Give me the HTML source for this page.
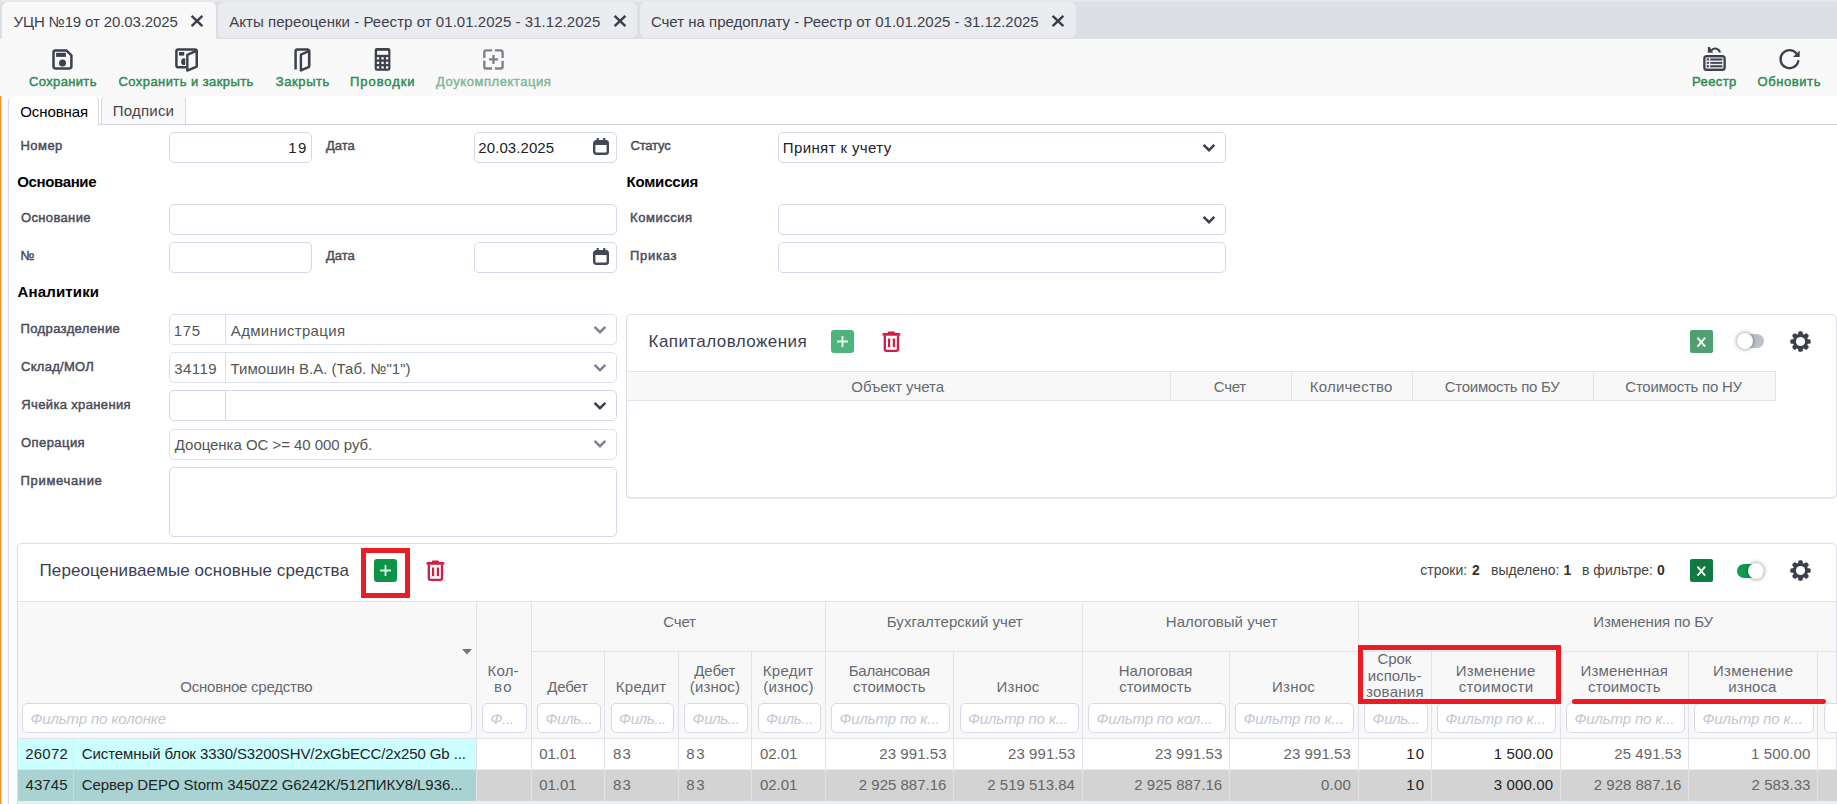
<!DOCTYPE html>
<html lang="ru"><head><meta charset="utf-8"><title>УЦН №19</title>
<style>
html,body{margin:0;padding:0;}
body{width:1837px;height:804px;overflow:hidden;background:#fff;font-family:"Liberation Sans",sans-serif;}
#root{position:relative;width:1837px;height:804px;overflow:hidden;background:#fff;}
#root div,#root span.t,#root svg{position:absolute;box-sizing:border-box;}
span.t{white-space:pre;line-height:20px;height:20px;}
.inp{border:1px solid #d5d8e6;border-radius:5px;background:#fff;}
.flt{border:1px solid #d6d9e6;border-radius:5px;background:#fff;}
.panel{border:1px solid #dcdde6;border-radius:5px;background:#fff;box-shadow:0 1px 1px rgba(40,40,90,.10);}
.vl{background:#e4e4ea;width:1px;}
.hl{background:#e4e4ea;height:1px;}

</style></head><body>
<div id="root">
<div class="" style="left:0px;top:0px;width:1837px;height:39px;background:#dcdfe4;"></div>
<div class="" style="left:0px;top:0px;width:1837px;height:2px;background:#e6e8ec;"></div>
<div class="" style="left:2px;top:2px;width:214px;height:38px;background:#f9f9f9;border-radius:6px 6px 0 0;"></div>
<div class="" style="left:218px;top:2px;width:419px;height:36px;background:#ebecf0;border-radius:6px;"></div>
<div class="" style="left:640px;top:2px;width:436px;height:36px;background:#ebecf0;border-radius:6px;"></div>
<span class="t" id="t1" style="left:13.55px;top:11.70px;font-size:15px;font-weight:400;color:#3b3f4c;letter-spacing:-0.125px;">УЦН №19 от 20.03.2025</span>
<span class="t" id="t2" style="left:229.30px;top:11.70px;font-size:15px;font-weight:400;color:#3b3f4c;letter-spacing:0.044px;">Акты переоценки - Реестр от 01.01.2025 - 31.12.2025</span>
<span class="t" id="t3" style="left:650.90px;top:11.70px;font-size:15px;font-weight:400;color:#3b3f4c;letter-spacing:-0.002px;">Счет на предоплату - Реестр от 01.01.2025 - 31.12.2025</span>
<svg style="left:189.5px;top:14.3px" width="14" height="14" viewBox="0 0 14 14"><path d="M1.6 1.9 L12.4 12.1 M12.4 1.9 L1.6 12.1" stroke="#3b3f4c" stroke-width="2.5" fill="none"/></svg>
<svg style="left:612.5px;top:14.3px" width="14" height="14" viewBox="0 0 14 14"><path d="M1.6 1.9 L12.4 12.1 M12.4 1.9 L1.6 12.1" stroke="#3b3f4c" stroke-width="2.5" fill="none"/></svg>
<svg style="left:1050.5px;top:14.3px" width="14" height="14" viewBox="0 0 14 14"><path d="M1.6 1.9 L12.4 12.1 M12.4 1.9 L1.6 12.1" stroke="#3b3f4c" stroke-width="2.5" fill="none"/></svg>
<div class="" style="left:0px;top:39px;width:1837px;height:57px;background:#f9f9f9;"></div>
<span class="t" id="t4" style="left:29.05px;top:71.70px;font-size:13px;font-weight:400;color:#2e8b57;letter-spacing:0.344px;-webkit-text-stroke:0.45px #2e8b57;">Сохранить</span>
<span class="t" id="t5" style="left:118.55px;top:71.70px;font-size:13px;font-weight:400;color:#2e8b57;letter-spacing:0.417px;-webkit-text-stroke:0.45px #2e8b57;">Сохранить и закрыть</span>
<span class="t" id="t6" style="left:275.80px;top:71.70px;font-size:13px;font-weight:400;color:#2e8b57;letter-spacing:0.583px;-webkit-text-stroke:0.45px #2e8b57;">Закрыть</span>
<span class="t" id="t7" style="left:350.05px;top:71.70px;font-size:13px;font-weight:400;color:#2e8b57;letter-spacing:0.929px;-webkit-text-stroke:0.45px #2e8b57;">Проводки</span>
<span class="t" id="t8" style="left:436.05px;top:71.70px;font-size:13px;font-weight:400;color:#7fb896;letter-spacing:0.554px;-webkit-text-stroke:0.45px #7fb896;">Доукомплектация</span>
<span class="t" id="t9" style="left:1692.05px;top:71.70px;font-size:13px;font-weight:400;color:#2e8b57;letter-spacing:0.400px;-webkit-text-stroke:0.45px #2e8b57;">Реестр</span>
<span class="t" id="t10" style="left:1757.55px;top:71.70px;font-size:13px;font-weight:400;color:#2e8b57;letter-spacing:0.571px;-webkit-text-stroke:0.45px #2e8b57;">Обновить</span>
<svg style="left:48px;top:45px" width="30" height="30" viewBox="48 45 30 30"><path d="M55.3 50.6 H66.6 L71.4 55.3 V66.6 a1.8 1.8 0 0 1 -1.8 1.8 H55.3 a1.8 1.8 0 0 1 -1.8 -1.8 V52.4 a1.8 1.8 0 0 1 1.8 -1.8 Z" fill="none" stroke="#3d404d" stroke-width="2.5" stroke-linejoin="round"/><rect x="56.1" y="52.8" width="9.8" height="4.1" fill="#3d404d"/><circle cx="62.5" cy="62.9" r="3.5" fill="#3d404d"/></svg>
<svg style="left:170px;top:44px" width="34" height="32" viewBox="170 44 34 32"><path d="M186.4 67.3 H178.2 a1.8 1.8 0 0 1 -1.8 -1.8 V51.2 a1.8 1.8 0 0 1 1.8 -1.8 H194.9 a1.8 1.8 0 0 1 1.8 1.8 V66" fill="none" stroke="#3d404d" stroke-width="2.5"/><path d="M187.3 54.9 L196.7 50.6 V66.6 L187.3 70.6 Z" fill="#f9f9f9" stroke="#3d404d" stroke-width="2.4" stroke-linejoin="round"/><rect x="179" y="52" width="5.2" height="3.6" fill="#3d404d"/><path d="M185 58.4 a3.3 3.3 0 0 0 0 6.6 Z" fill="#3d404d" transform="translate(-0.6 0)"/><rect x="182.6" y="58.4" width="2.6" height="6.6" fill="#3d404d"/></svg>
<svg style="left:288px;top:44px" width="30" height="32" viewBox="288 44 30 32"><path d="M295.6 69.6 V51.2 a1.8 1.8 0 0 1 1.8 -1.8 H307.3 a1.8 1.8 0 0 1 1.8 1.8 V66" fill="none" stroke="#3d404d" stroke-width="2.5"/><path d="M300.9 54.6 L309.1 51 V66.8 L300.9 70.4 Z" fill="#f9f9f9" stroke="#3d404d" stroke-width="2.4" stroke-linejoin="round"/></svg>
<svg style="left:370px;top:44px" width="26" height="32" viewBox="370 44 26 32"><rect x="374.7" y="48.1" width="15.7" height="22.6" rx="2.2" fill="#3d404d"/><rect x="377.1" y="50.8" width="11.1" height="4" fill="#f9f9f9"/><rect x="376.85" y="57.15" width="2.3" height="2.3" fill="#f9f9f9"/><rect x="376.85" y="61.75" width="2.3" height="2.3" fill="#f9f9f9"/><rect x="376.85" y="66.25" width="2.3" height="2.3" fill="#f9f9f9"/><rect x="381.40" y="57.15" width="2.3" height="2.3" fill="#f9f9f9"/><rect x="381.40" y="61.75" width="2.3" height="2.3" fill="#f9f9f9"/><rect x="381.40" y="66.25" width="2.3" height="2.3" fill="#f9f9f9"/><rect x="385.95" y="57.15" width="2.3" height="2.3" fill="#f9f9f9"/><rect x="385.95" y="61.75" width="2.3" height="2.3" fill="#f9f9f9"/><rect x="385.95" y="66.25" width="2.3" height="2.3" fill="#f9f9f9"/></svg>
<svg style="left:478px;top:44px" width="32" height="32" viewBox="478 44 32 32"><g fill="none" stroke="#7e828e" stroke-width="2.4"><path d="M484.3 58.1 V52.4 a2 2 0 0 1 2 -2 H492.1"/><path d="M494.9 50.4 H500.6 a2 2 0 0 1 2 2 V58.1"/><path d="M502.6 60.7 V66.5 a2 2 0 0 1 -2 2 H494.9"/><path d="M492.1 68.5 H486.3 a2 2 0 0 1 -2 -2 V60.7"/><path d="M493.45 54.9 V63.9 M489 59.4 H498"/></g></svg>
<svg style="left:1698px;top:42px" width="34" height="34" viewBox="1698 42 34 34"><rect x="1705.2" y="57" width="18.6" height="11.9" fill="#c6c7cc"/><rect x="1705.2" y="60.9" width="18.6" height="0.7" fill="#fff"/><rect x="1705.2" y="64.3" width="18.6" height="0.7" fill="#fff"/><rect x="1709.3" y="57" width="0.7" height="11.9" fill="#fff"/><rect x="1707" y="58.65" width="1.9" height="1.7" fill="#3d404d"/><rect x="1710.4" y="58.65" width="11.7" height="1.7" fill="#3d404d"/><rect x="1707" y="62.05" width="1.9" height="1.7" fill="#3d404d"/><rect x="1710.4" y="62.05" width="11.7" height="1.7" fill="#3d404d"/><rect x="1707" y="65.35" width="1.9" height="1.7" fill="#3d404d"/><rect x="1710.4" y="65.35" width="11.7" height="1.7" fill="#3d404d"/><rect x="1704.3" y="56.1" width="20.4" height="13.7" rx="2.4" fill="none" stroke="#3d404d" stroke-width="2.2"/><path d="M1711.5 50.3 C1714.5 47.2 1719 48.3 1720 52.6" fill="none" stroke="#3d404d" stroke-width="2.1"/><path d="M1707.9 46.9 H1709.8 L1713.1 52.8 H1707.9 Z" fill="#3d404d"/></svg>
<svg style="left:1774px;top:44px" width="32" height="32" viewBox="1774 44 32 32"><path d="M1796.6 53.6 A9 9 0 1 0 1798.3 61.2" fill="none" stroke="#3d404d" stroke-width="2.3" stroke-linecap="round"/><path d="M1799.7 50.4 V56.9 H1793 Z" fill="#3d404d"/></svg>
<div class="" style="left:0px;top:96px;width:1px;height:708px;background:#f7941d;"></div>
<div class="" style="left:1px;top:96px;width:1px;height:708px;background:#fdeacb;"></div>
<div class="" style="left:8px;top:100px;width:1px;height:704px;background:#d5d9e6;"></div>
<div class="" style="left:9px;top:124px;width:1828px;height:1px;background:#cfd4e0;"></div>
<div class="" style="left:101px;top:96px;width:85px;height:29px;background:#f8f8f8;border:1px solid #d5d9e6;border-top:none;border-bottom:1px solid #cfd4e0;border-radius:5px 5px 0 0;"></div>
<div class="" style="left:8px;top:96px;width:91px;height:30px;background:#fff;border:1px solid #d5d9e6;border-top:none;border-bottom:none;border-radius:5px 5px 0 0;"></div>
<span class="t" id="t11" style="left:20.30px;top:102.20px;font-size:15px;font-weight:400;color:#000;letter-spacing:-0.107px;">Основная</span>
<span class="t" id="t12" style="left:112.80px;top:101.20px;font-size:15px;font-weight:400;color:#444;letter-spacing:0.208px;">Подписи</span>
<span class="t" id="t13" style="left:20.55px;top:136.20px;font-size:13px;font-weight:400;color:#4a4a58;letter-spacing:0.438px;-webkit-text-stroke:0.45px #4a4a58;">Номер</span>
<div class="inp" style="left:169px;top:132px;width:143px;height:31px;"></div>
<span class="t" id="t14" style="left:288.30px;top:138.20px;font-size:15px;font-weight:400;color:#222;letter-spacing:1.250px;">19</span>
<span class="t" id="t15" style="left:326.05px;top:136.20px;font-size:13px;font-weight:400;color:#4a4a58;letter-spacing:0.000px;-webkit-text-stroke:0.45px #4a4a58;">Дата</span>
<div class="inp" style="left:474px;top:132px;width:143px;height:31px;"></div>
<span class="t" id="t16" style="left:478.30px;top:138.20px;font-size:15px;font-weight:400;color:#222;letter-spacing:0.083px;">20.03.2025</span>
<span class="t" id="t17" style="left:630.55px;top:136.20px;font-size:13px;font-weight:400;color:#4a4a58;letter-spacing:-0.200px;-webkit-text-stroke:0.45px #4a4a58;">Статус</span>
<div class="inp" style="left:778px;top:132px;width:448px;height:31px;"></div>
<span class="t" id="t18" style="left:782.80px;top:138.20px;font-size:15px;font-weight:400;color:#222;letter-spacing:0.385px;">Принят к учету</span>
<span class="t" id="t19" style="left:17.30px;top:172.20px;font-size:15px;font-weight:700;color:#000;letter-spacing:-0.375px;">Основание</span>
<span class="t" id="t20" style="left:626.55px;top:172.20px;font-size:15px;font-weight:700;color:#000;letter-spacing:-0.214px;">Комиссия</span>
<span class="t" id="t21" style="left:21.05px;top:208.20px;font-size:13px;font-weight:400;color:#4a4a58;letter-spacing:0.344px;-webkit-text-stroke:0.45px #4a4a58;">Основание</span>
<div class="inp" style="left:169px;top:204px;width:448px;height:31px;"></div>
<span class="t" id="t22" style="left:630.05px;top:208.20px;font-size:13px;font-weight:400;color:#4a4a58;letter-spacing:0.536px;-webkit-text-stroke:0.45px #4a4a58;">Комиссия</span>
<div class="inp" style="left:778px;top:204px;width:448px;height:31px;"></div>
<span class="t" id="t23" style="left:20.55px;top:246.20px;font-size:13px;font-weight:400;color:#4a4a58;letter-spacing:0.000px;-webkit-text-stroke:0.45px #4a4a58;">№</span>
<div class="inp" style="left:169px;top:242px;width:143px;height:31px;"></div>
<span class="t" id="t24" style="left:326.05px;top:246.20px;font-size:13px;font-weight:400;color:#4a4a58;letter-spacing:0.000px;-webkit-text-stroke:0.45px #4a4a58;">Дата</span>
<div class="inp" style="left:474px;top:242px;width:143px;height:31px;"></div>
<span class="t" id="t25" style="left:630.05px;top:246.20px;font-size:13px;font-weight:400;color:#4a4a58;letter-spacing:0.700px;-webkit-text-stroke:0.45px #4a4a58;">Приказ</span>
<div class="inp" style="left:778px;top:242px;width:448px;height:31px;"></div>
<span class="t" id="t26" style="left:17.55px;top:282.20px;font-size:15px;font-weight:700;color:#000;letter-spacing:0.156px;">Аналитики</span>
<span class="t" id="t27" style="left:20.55px;top:318.70px;font-size:13px;font-weight:400;color:#4a4a58;letter-spacing:0.375px;-webkit-text-stroke:0.45px #4a4a58;">Подразделение</span>
<div class="inp" style="left:169px;top:314px;width:448px;height:31px;border-color:#dcdfec;"></div>
<div class="" style="left:225px;top:315px;width:1px;height:29px;background:#dcdfec;"></div>
<span class="t" id="t28" style="left:173.80px;top:320.70px;font-size:15px;font-weight:400;color:#555;letter-spacing:0.625px;">175</span>
<span class="t" id="t29" style="left:230.80px;top:320.70px;font-size:15px;font-weight:400;color:#555;letter-spacing:0.333px;">Администрация</span>
<span class="t" id="t30" style="left:21.05px;top:357.20px;font-size:13px;font-weight:400;color:#4a4a58;letter-spacing:0.281px;-webkit-text-stroke:0.45px #4a4a58;">Склад/МОЛ</span>
<div class="inp" style="left:169px;top:352px;width:448px;height:31px;border-color:#dcdfec;"></div>
<div class="" style="left:225px;top:353px;width:1px;height:29px;background:#dcdfec;"></div>
<span class="t" id="t31" style="left:174.30px;top:358.70px;font-size:15px;font-weight:400;color:#555;letter-spacing:0.438px;">34119</span>
<span class="t" id="t32" style="left:230.55px;top:358.70px;font-size:15px;font-weight:400;color:#555;letter-spacing:0.011px;">Тимошин В.А. (Таб. №&quot;1&quot;)</span>
<span class="t" id="t33" style="left:21.30px;top:394.70px;font-size:13px;font-weight:400;color:#4a4a58;letter-spacing:0.357px;-webkit-text-stroke:0.45px #4a4a58;">Ячейка хранения</span>
<div class="inp" style="left:169px;top:390px;width:448px;height:31px;border-color:#d3d6e6;"></div>
<div class="" style="left:225px;top:391px;width:1px;height:29px;background:#d3d6e6;"></div>
<span class="t" id="t34" style="left:21.05px;top:432.70px;font-size:13px;font-weight:400;color:#4a4a58;letter-spacing:0.429px;-webkit-text-stroke:0.45px #4a4a58;">Операция</span>
<div class="inp" style="left:169px;top:429px;width:448px;height:31px;border-color:#dcdfec;"></div>
<span class="t" id="t35" style="left:174.80px;top:434.70px;font-size:15px;font-weight:400;color:#555;letter-spacing:-0.040px;">Дооценка ОС &gt;= 40 000 руб.</span>
<span class="t" id="t36" style="left:20.55px;top:471.20px;font-size:13px;font-weight:400;color:#4a4a58;letter-spacing:0.667px;-webkit-text-stroke:0.45px #4a4a58;">Примечание</span>
<div class="inp" style="left:169px;top:467px;width:448px;height:70px;"></div>
<svg style="left:1202px;top:142.5px" width="14" height="10" viewBox="0 0 14 10"><path d="M1.6 1.8 L7 7.2 L12.4 1.8" stroke="#3b3f4c" stroke-width="2.4" fill="none"/></svg>
<svg style="left:1202px;top:214.5px" width="14" height="10" viewBox="0 0 14 10"><path d="M1.6 1.8 L7 7.2 L12.4 1.8" stroke="#3b3f4c" stroke-width="2.4" fill="none"/></svg>
<svg style="left:593px;top:325px" width="14" height="10" viewBox="0 0 14 10"><path d="M1.6 1.8 L7 7.2 L12.4 1.8" stroke="#7f828e" stroke-width="2.4" fill="none"/></svg>
<svg style="left:593px;top:363px" width="14" height="10" viewBox="0 0 14 10"><path d="M1.6 1.8 L7 7.2 L12.4 1.8" stroke="#7f828e" stroke-width="2.4" fill="none"/></svg>
<svg style="left:593px;top:401px" width="14" height="10" viewBox="0 0 14 10"><path d="M1.6 1.8 L7 7.2 L12.4 1.8" stroke="#3b3f4c" stroke-width="2.4" fill="none"/></svg>
<svg style="left:593px;top:439px" width="14" height="10" viewBox="0 0 14 10"><path d="M1.6 1.8 L7 7.2 L12.4 1.8" stroke="#7f828e" stroke-width="2.4" fill="none"/></svg>
<svg style="left:593px;top:138px" width="16" height="17" viewBox="0 0 16 17"><rect x="1.2" y="3.2" width="13.6" height="12.6" rx="2" fill="none" stroke="#444854" stroke-width="2.4"/><rect x="1" y="3" width="14" height="4" fill="#444854"/><rect x="3.6" y="0" width="2.2" height="4" fill="#444854"/><rect x="10.2" y="0" width="2.2" height="4" fill="#444854"/></svg>
<svg style="left:593px;top:248px" width="16" height="17" viewBox="0 0 16 17"><rect x="1.2" y="3.2" width="13.6" height="12.6" rx="2" fill="none" stroke="#444854" stroke-width="2.4"/><rect x="1" y="3" width="14" height="4" fill="#444854"/><rect x="3.6" y="0" width="2.2" height="4" fill="#444854"/><rect x="10.2" y="0" width="2.2" height="4" fill="#444854"/></svg>
<div class="panel" style="left:626px;top:314px;width:1211px;height:184px;"></div>
<span class="t" id="t37" style="left:648.55px;top:331.50px;font-size:17px;font-weight:400;color:#3a3f51;letter-spacing:0.433px;">Капиталовложения</span>
<div class="" style="left:831px;top:330px;width:23px;height:23px;background:#4db47c;border-radius:3px;"></div>
<svg style="left:831px;top:330px" width="23" height="23" viewBox="0 0 23 23"><path d="M11.5 6 V17 M6 11.5 H17" stroke="#fff" stroke-opacity=".88" stroke-width="1.8"/></svg>
<svg style="left:882px;top:330.5px" width="19" height="22" viewBox="0 0 19 22"><path d="M2.8 4.6 V18.1 a1.7 1.7 0 0 0 1.7 1.7 H14.3 a1.7 1.7 0 0 0 1.7 -1.7 V4.6" fill="none" stroke="#d41d46" stroke-width="2.3"/><rect x="0.4" y="1.9" width="18" height="2.9" rx="1.2" fill="#d41d46"/><rect x="5.8" y="0.4" width="7.2" height="2.4" rx="1" fill="#d41d46"/><rect x="6" y="7.5" width="2.2" height="8.6" fill="#d41d46"/><rect x="10.8" y="7.5" width="2.2" height="8.6" fill="#d41d46"/></svg>
<div class="" style="left:1690px;top:330px;width:23px;height:23px;background:#4f9f73;border-radius:2px;"></div>
<svg style="left:1690px;top:330px" width="23" height="23" viewBox="0 0 23 23"><path d="M7.5 7.6 L15.1 16.6 M15.1 7.6 L7.5 16.6" stroke="#fff" stroke-opacity=".92" stroke-width="2.1"/></svg>
<div class="" style="left:1739px;top:334.1px;width:25px;height:14px;background:#bcc0cb;border-radius:7px;"></div>
<div class="" style="left:1736.6px;top:332.8px;width:16.5px;height:16.5px;background:#fff;border-radius:9px;box-shadow:0 0 4px rgba(0,0,0,.5);"></div>
<svg style="left:1789px;top:330px" width="23" height="23" viewBox="-11.5 -11.5 23 23"><circle r="7.7" fill="#3b3f4c"/><rect x="-2.3" y="-10.2" width="4.6" height="6" rx="1.5" fill="#3b3f4c" transform="rotate(0)"/><rect x="-2.3" y="-10.2" width="4.6" height="6" rx="1.5" fill="#3b3f4c" transform="rotate(45)"/><rect x="-2.3" y="-10.2" width="4.6" height="6" rx="1.5" fill="#3b3f4c" transform="rotate(90)"/><rect x="-2.3" y="-10.2" width="4.6" height="6" rx="1.5" fill="#3b3f4c" transform="rotate(135)"/><rect x="-2.3" y="-10.2" width="4.6" height="6" rx="1.5" fill="#3b3f4c" transform="rotate(180)"/><rect x="-2.3" y="-10.2" width="4.6" height="6" rx="1.5" fill="#3b3f4c" transform="rotate(225)"/><rect x="-2.3" y="-10.2" width="4.6" height="6" rx="1.5" fill="#3b3f4c" transform="rotate(270)"/><rect x="-2.3" y="-10.2" width="4.6" height="6" rx="1.5" fill="#3b3f4c" transform="rotate(315)"/><circle r="4.6" fill="#fff"/></svg>
<div class="" style="left:627px;top:371px;width:1149px;height:30px;background:#f8f8f8;border-top:1px solid #e1e2ea;border-bottom:1px solid #e1e2ea;"></div>
<div class="" style="left:1170px;top:371px;width:1px;height:30px;background:#e1e2ea;"></div>
<div class="" style="left:1291px;top:371px;width:1px;height:30px;background:#e1e2ea;"></div>
<div class="" style="left:1412px;top:371px;width:1px;height:30px;background:#e1e2ea;"></div>
<div class="" style="left:1593px;top:371px;width:1px;height:30px;background:#e1e2ea;"></div>
<div class="" style="left:1775px;top:371px;width:1px;height:30px;background:#e1e2ea;"></div>
<span class="t" id="t38" style="left:851.30px;top:377.00px;font-size:15px;font-weight:400;color:#666a70;letter-spacing:-0.068px;">Объект учета</span>
<span class="t" id="t39" style="left:1213.80px;top:377.00px;font-size:15px;font-weight:400;color:#666a70;letter-spacing:-0.250px;">Счет</span>
<span class="t" id="t40" style="left:1309.80px;top:377.00px;font-size:15px;font-weight:400;color:#666a70;letter-spacing:0.222px;">Количество</span>
<span class="t" id="t41" style="left:1444.80px;top:377.00px;font-size:15px;font-weight:400;color:#666a70;letter-spacing:-0.286px;">Стоимость по БУ</span>
<span class="t" id="t42" style="left:1625.30px;top:377.00px;font-size:15px;font-weight:400;color:#666a70;letter-spacing:-0.250px;">Стоимость по НУ</span>
<div class="panel" style="left:17px;top:543px;width:1820px;height:270px;"></div>
<span class="t" id="t43" style="left:39.55px;top:560.50px;font-size:17px;font-weight:400;color:#3a3f51;letter-spacing:0.078px;">Переоцениваемые основные средства</span>
<div class="" style="left:361px;top:548px;width:49px;height:50px;border:5px solid #ec1c24;"></div>
<div class="" style="left:374px;top:559px;width:23px;height:23px;background:#0d9344;border-radius:3px;"></div>
<svg style="left:374px;top:559px" width="23" height="23" viewBox="0 0 23 23"><path d="M11.5 6 V17 M6 11.5 H17" stroke="#fff" stroke-opacity=".88" stroke-width="1.8"/></svg>
<svg style="left:426px;top:559.5px" width="19" height="22" viewBox="0 0 19 22"><path d="M2.8 4.6 V18.1 a1.7 1.7 0 0 0 1.7 1.7 H14.3 a1.7 1.7 0 0 0 1.7 -1.7 V4.6" fill="none" stroke="#d11c45" stroke-width="2.3"/><rect x="0.4" y="1.9" width="18" height="2.9" rx="1.2" fill="#d11c45"/><rect x="5.8" y="0.4" width="7.2" height="2.4" rx="1" fill="#d11c45"/><rect x="6" y="7.5" width="2.2" height="8.6" fill="#d11c45"/><rect x="10.8" y="7.5" width="2.2" height="8.6" fill="#d11c45"/></svg>
<span class="t" id="t44" style="left:1420.30px;top:560.10px;font-size:14px;font-weight:400;color:#444;letter-spacing:0.000px;">строки: </span>
<span class="t" id="t45" style="left:1472.05px;top:560.10px;font-size:14px;font-weight:700;color:#333;letter-spacing:0.000px;">2</span>
<span class="t" id="t46" style="left:1491.05px;top:560.10px;font-size:14px;font-weight:400;color:#444;letter-spacing:0.000px;">выделено: </span>
<span class="t" id="t47" style="left:1563.55px;top:560.10px;font-size:14px;font-weight:700;color:#333;letter-spacing:0.000px;">1</span>
<span class="t" id="t48" style="left:1582.05px;top:560.10px;font-size:14px;font-weight:400;color:#444;letter-spacing:0.000px;">в фильтре: </span>
<span class="t" id="t49" style="left:1657.05px;top:560.10px;font-size:14px;font-weight:700;color:#333;letter-spacing:0.000px;">0</span>
<div class="" style="left:1690px;top:559px;width:23px;height:23px;background:#117a40;border-radius:2px;"></div>
<svg style="left:1690px;top:559px" width="23" height="23" viewBox="0 0 23 23"><path d="M7.5 7.6 L15.1 16.6 M15.1 7.6 L7.5 16.6" stroke="#fff" stroke-opacity=".92" stroke-width="2.1"/></svg>
<div class="" style="left:1737px;top:563.9px;width:27px;height:14px;background:#0f9d4d;border-radius:7px;"></div>
<div class="" style="left:1747.6px;top:562.6px;width:16.5px;height:16.5px;background:#fff;border-radius:9px;box-shadow:0 0 4px rgba(0,0,0,.5);"></div>
<svg style="left:1789px;top:559px" width="23" height="23" viewBox="-11.5 -11.5 23 23"><circle r="7.7" fill="#3b3f4c"/><rect x="-2.3" y="-10.2" width="4.6" height="6" rx="1.5" fill="#3b3f4c" transform="rotate(0)"/><rect x="-2.3" y="-10.2" width="4.6" height="6" rx="1.5" fill="#3b3f4c" transform="rotate(45)"/><rect x="-2.3" y="-10.2" width="4.6" height="6" rx="1.5" fill="#3b3f4c" transform="rotate(90)"/><rect x="-2.3" y="-10.2" width="4.6" height="6" rx="1.5" fill="#3b3f4c" transform="rotate(135)"/><rect x="-2.3" y="-10.2" width="4.6" height="6" rx="1.5" fill="#3b3f4c" transform="rotate(180)"/><rect x="-2.3" y="-10.2" width="4.6" height="6" rx="1.5" fill="#3b3f4c" transform="rotate(225)"/><rect x="-2.3" y="-10.2" width="4.6" height="6" rx="1.5" fill="#3b3f4c" transform="rotate(270)"/><rect x="-2.3" y="-10.2" width="4.6" height="6" rx="1.5" fill="#3b3f4c" transform="rotate(315)"/><circle r="4.6" fill="#fff"/></svg>
<div class="" style="left:18px;top:601px;width:1818px;height:138px;background:#f8f8f8;border-top:1px solid #e1e2ea;"></div>
<div class="" style="left:476px;top:602px;width:1px;height:137px;background:#e1e2ea;"></div>
<div class="" style="left:531px;top:602px;width:1px;height:137px;background:#e1e2ea;"></div>
<div class="" style="left:604px;top:651px;width:1px;height:88px;background:#e1e2ea;"></div>
<div class="" style="left:678px;top:651px;width:1px;height:88px;background:#e1e2ea;"></div>
<div class="" style="left:751px;top:651px;width:1px;height:88px;background:#e1e2ea;"></div>
<div class="" style="left:825px;top:602px;width:1px;height:137px;background:#e1e2ea;"></div>
<div class="" style="left:953px;top:651px;width:1px;height:88px;background:#e1e2ea;"></div>
<div class="" style="left:1082px;top:602px;width:1px;height:137px;background:#e1e2ea;"></div>
<div class="" style="left:1229px;top:651px;width:1px;height:88px;background:#e1e2ea;"></div>
<div class="" style="left:1358px;top:602px;width:1px;height:137px;background:#e1e2ea;"></div>
<div class="" style="left:1431px;top:651px;width:1px;height:88px;background:#e1e2ea;"></div>
<div class="" style="left:1560px;top:651px;width:1px;height:88px;background:#e1e2ea;"></div>
<div class="" style="left:1688px;top:651px;width:1px;height:88px;background:#e1e2ea;"></div>
<div class="" style="left:1817px;top:651px;width:1px;height:88px;background:#e1e2ea;"></div>
<div class="" style="left:531px;top:651px;width:1306px;height:1px;background:#e1e2ea;"></div>
<div class="" style="left:18px;top:738px;width:1818px;height:1px;background:#e1e2ea;"></div>
<span class="t" id="t50" style="left:663.30px;top:612.20px;font-size:15px;font-weight:400;color:#666a70;letter-spacing:-0.167px;">Счет</span>
<span class="t" id="t51" style="left:886.80px;top:612.20px;font-size:15px;font-weight:400;color:#666a70;letter-spacing:0.044px;">Бухгалтерский учет</span>
<span class="t" id="t52" style="left:1165.80px;top:612.20px;font-size:15px;font-weight:400;color:#666a70;letter-spacing:0.019px;">Налоговый учет</span>
<span class="t" id="t53" style="left:1593.30px;top:612.20px;font-size:15px;font-weight:400;color:#666a70;letter-spacing:-0.125px;">Изменения по БУ</span>
<span class="t" id="t54" style="left:180.30px;top:677.00px;font-size:15px;font-weight:400;color:#666a70;letter-spacing:-0.234px;">Основное средство</span>
<span class="t" id="t55" style="left:487.55px;top:661.20px;font-size:15px;font-weight:400;color:#666a70;letter-spacing:0.167px;">Кол-</span>
<span class="t" id="t56" style="left:494.05px;top:677.00px;font-size:15px;font-weight:400;color:#666a70;letter-spacing:1.500px;">во</span>
<span class="t" id="t57" style="left:547.30px;top:677.00px;font-size:15px;font-weight:400;color:#666a70;letter-spacing:-0.250px;">Дебет</span>
<span class="t" id="t58" style="left:615.80px;top:677.00px;font-size:15px;font-weight:400;color:#666a70;letter-spacing:0.250px;">Кредит</span>
<span class="t" id="t59" style="left:694.30px;top:661.20px;font-size:15px;font-weight:400;color:#666a70;letter-spacing:-0.125px;">Дебет</span>
<span class="t" id="t60" style="left:689.80px;top:677.00px;font-size:15px;font-weight:400;color:#666a70;letter-spacing:0.125px;">(износ)</span>
<span class="t" id="t61" style="left:762.80px;top:661.20px;font-size:15px;font-weight:400;color:#666a70;letter-spacing:0.250px;">Кредит</span>
<span class="t" id="t62" style="left:763.30px;top:677.00px;font-size:15px;font-weight:400;color:#666a70;letter-spacing:0.125px;">(износ)</span>
<span class="t" id="t63" style="left:848.80px;top:661.20px;font-size:15px;font-weight:400;color:#666a70;letter-spacing:-0.278px;">Балансовая</span>
<span class="t" id="t64" style="left:853.05px;top:677.00px;font-size:15px;font-weight:400;color:#666a70;letter-spacing:0.094px;">стоимость</span>
<span class="t" id="t65" style="left:996.55px;top:677.00px;font-size:15px;font-weight:400;color:#666a70;letter-spacing:0.250px;">Износ</span>
<span class="t" id="t66" style="left:1118.80px;top:661.20px;font-size:15px;font-weight:400;color:#666a70;letter-spacing:-0.062px;">Налоговая</span>
<span class="t" id="t67" style="left:1119.30px;top:677.00px;font-size:15px;font-weight:400;color:#666a70;letter-spacing:0.062px;">стоимость</span>
<span class="t" id="t68" style="left:1272.05px;top:677.00px;font-size:15px;font-weight:400;color:#666a70;letter-spacing:0.250px;">Износ</span>
<span class="t" id="t69" style="left:1377.55px;top:648.60px;font-size:15px;font-weight:400;color:#666a70;letter-spacing:-0.083px;">Срок</span>
<span class="t" id="t70" style="left:1367.80px;top:665.90px;font-size:15px;font-weight:400;color:#666a70;letter-spacing:0.000px;">исполь-</span>
<span class="t" id="t71" style="left:1366.05px;top:681.90px;font-size:15px;font-weight:400;color:#666a70;letter-spacing:0.250px;">зования</span>
<span class="t" id="t72" style="left:1455.80px;top:661.20px;font-size:15px;font-weight:400;color:#666a70;letter-spacing:0.188px;">Изменение</span>
<span class="t" id="t73" style="left:1458.80px;top:677.00px;font-size:15px;font-weight:400;color:#666a70;letter-spacing:0.250px;">стоимости</span>
<span class="t" id="t74" style="left:1580.55px;top:661.20px;font-size:15px;font-weight:400;color:#666a70;letter-spacing:0.139px;">Измененная</span>
<span class="t" id="t75" style="left:1588.05px;top:677.00px;font-size:15px;font-weight:400;color:#666a70;letter-spacing:0.094px;">стоимость</span>
<span class="t" id="t76" style="left:1713.05px;top:661.20px;font-size:15px;font-weight:400;color:#666a70;letter-spacing:0.250px;">Изменение</span>
<span class="t" id="t77" style="left:1728.30px;top:677.00px;font-size:15px;font-weight:400;color:#666a70;letter-spacing:0.050px;">износа</span>
<svg style="left:461px;top:648px" width="12" height="8" viewBox="0 0 12 8"><path d="M1 1 H11 L6 6.6 Z" fill="#777"/></svg>
<div class="flt" style="left:22px;top:703px;width:450px;height:30px;"></div>
<span class="t" id="t78" style="left:30.55px;top:708.60px;font-size:15px;font-weight:400;color:#c3c6d4;letter-spacing:-0.141px;font-style:italic;">Фильтр по колонке</span>
<div class="flt" style="left:482px;top:703px;width:45px;height:30px;"></div>
<span class="t" id="t79" style="left:490.55px;top:708.60px;font-size:15px;font-weight:400;color:#c3c6d4;letter-spacing:-0.333px;font-style:italic;">Ф...</span>
<div class="flt" style="left:537px;top:703px;width:63.5px;height:30px;"></div>
<span class="t" id="t80" style="left:545.55px;top:708.60px;font-size:15px;font-weight:400;color:#c3c6d4;letter-spacing:-0.333px;font-style:italic;">Филь...</span>
<div class="flt" style="left:610.5px;top:703px;width:63.5px;height:30px;"></div>
<span class="t" id="t81" style="left:619.05px;top:708.60px;font-size:15px;font-weight:400;color:#c3c6d4;letter-spacing:-0.333px;font-style:italic;">Филь...</span>
<div class="flt" style="left:684px;top:703px;width:63.5px;height:30px;"></div>
<span class="t" id="t82" style="left:692.55px;top:708.60px;font-size:15px;font-weight:400;color:#c3c6d4;letter-spacing:-0.333px;font-style:italic;">Филь...</span>
<div class="flt" style="left:757.5px;top:703px;width:63.5px;height:30px;"></div>
<span class="t" id="t83" style="left:766.05px;top:708.60px;font-size:15px;font-weight:400;color:#c3c6d4;letter-spacing:-0.333px;font-style:italic;">Филь...</span>
<div class="flt" style="left:831px;top:703px;width:118.5px;height:30px;"></div>
<span class="t" id="t84" style="left:839.55px;top:708.60px;font-size:15px;font-weight:400;color:#c3c6d4;letter-spacing:-0.154px;font-style:italic;">Фильтр по к...</span>
<div class="flt" style="left:959.5px;top:703px;width:119.0px;height:30px;"></div>
<span class="t" id="t85" style="left:968.05px;top:708.60px;font-size:15px;font-weight:400;color:#c3c6d4;letter-spacing:-0.154px;font-style:italic;">Фильтр по к...</span>
<div class="flt" style="left:1088px;top:703px;width:137.5px;height:30px;"></div>
<span class="t" id="t86" style="left:1096.55px;top:708.60px;font-size:15px;font-weight:400;color:#c3c6d4;letter-spacing:-0.167px;font-style:italic;">Фильтр по кол...</span>
<div class="flt" style="left:1235px;top:703px;width:118.5px;height:30px;"></div>
<span class="t" id="t87" style="left:1243.55px;top:708.60px;font-size:15px;font-weight:400;color:#c3c6d4;letter-spacing:-0.115px;font-style:italic;">Фильтр по к...</span>
<div class="flt" style="left:1364px;top:703px;width:63.5px;height:30px;"></div>
<span class="t" id="t88" style="left:1372.55px;top:708.60px;font-size:15px;font-weight:400;color:#c3c6d4;letter-spacing:-0.333px;font-style:italic;">Филь...</span>
<div class="flt" style="left:1437px;top:703px;width:118.5px;height:30px;"></div>
<span class="t" id="t89" style="left:1445.55px;top:708.60px;font-size:15px;font-weight:400;color:#c3c6d4;letter-spacing:-0.115px;font-style:italic;">Фильтр по к...</span>
<div class="flt" style="left:1566px;top:703px;width:118.5px;height:30px;"></div>
<span class="t" id="t90" style="left:1574.55px;top:708.60px;font-size:15px;font-weight:400;color:#c3c6d4;letter-spacing:-0.154px;font-style:italic;">Фильтр по к...</span>
<div class="flt" style="left:1694px;top:703px;width:119.5px;height:30px;"></div>
<span class="t" id="t91" style="left:1702.55px;top:708.60px;font-size:15px;font-weight:400;color:#c3c6d4;letter-spacing:-0.115px;font-style:italic;">Фильтр по к...</span>
<div class="flt" style="left:1823.5px;top:703px;width:36.5px;height:30px;"></div>
<span class="t" id="t92" style="left:1832.30px;top:708.60px;font-size:15px;font-weight:400;color:#c3c6d4;letter-spacing:0.000px;font-style:italic;"></span>
<div class="" style="left:18px;top:739px;width:459px;height:31px;background:#ccffff;"></div>
<div class="" style="left:18px;top:770px;width:459px;height:31px;background:#a9d3d3;"></div>
<div class="" style="left:477px;top:770px;width:1360px;height:31px;background:#d3d3d3;"></div>
<div class="" style="left:18px;top:769px;width:1819px;height:1px;background:#e6e8ee;"></div>
<div class="" style="left:18px;top:769px;width:459px;height:1px;background:#c3eded;"></div>
<div class="" style="left:18px;top:801px;width:1819px;height:3px;background:#eceef2;"></div>
<div class="" style="left:73px;top:739px;width:1px;height:31px;background:#dfe9ee;"></div>
<div class="" style="left:73px;top:770px;width:1px;height:31px;background:#c2dcdc;"></div>
<div class="" style="left:476px;top:739px;width:1px;height:30px;background:#e1e2ea;"></div>
<div class="" style="left:476px;top:770px;width:1px;height:31px;background:#e3e3e6;"></div>
<div class="" style="left:531px;top:739px;width:1px;height:30px;background:#e1e2ea;"></div>
<div class="" style="left:531px;top:770px;width:1px;height:31px;background:#e3e3e6;"></div>
<div class="" style="left:604px;top:739px;width:1px;height:30px;background:#e1e2ea;"></div>
<div class="" style="left:604px;top:770px;width:1px;height:31px;background:#e3e3e6;"></div>
<div class="" style="left:678px;top:739px;width:1px;height:30px;background:#e1e2ea;"></div>
<div class="" style="left:678px;top:770px;width:1px;height:31px;background:#e3e3e6;"></div>
<div class="" style="left:751px;top:739px;width:1px;height:30px;background:#e1e2ea;"></div>
<div class="" style="left:751px;top:770px;width:1px;height:31px;background:#e3e3e6;"></div>
<div class="" style="left:825px;top:739px;width:1px;height:30px;background:#e1e2ea;"></div>
<div class="" style="left:825px;top:770px;width:1px;height:31px;background:#e3e3e6;"></div>
<div class="" style="left:953px;top:739px;width:1px;height:30px;background:#e1e2ea;"></div>
<div class="" style="left:953px;top:770px;width:1px;height:31px;background:#e3e3e6;"></div>
<div class="" style="left:1082px;top:739px;width:1px;height:30px;background:#e1e2ea;"></div>
<div class="" style="left:1082px;top:770px;width:1px;height:31px;background:#e3e3e6;"></div>
<div class="" style="left:1229px;top:739px;width:1px;height:30px;background:#e1e2ea;"></div>
<div class="" style="left:1229px;top:770px;width:1px;height:31px;background:#e3e3e6;"></div>
<div class="" style="left:1358px;top:739px;width:1px;height:30px;background:#e1e2ea;"></div>
<div class="" style="left:1358px;top:770px;width:1px;height:31px;background:#e3e3e6;"></div>
<div class="" style="left:1431px;top:739px;width:1px;height:30px;background:#e1e2ea;"></div>
<div class="" style="left:1431px;top:770px;width:1px;height:31px;background:#e3e3e6;"></div>
<div class="" style="left:1560px;top:739px;width:1px;height:30px;background:#e1e2ea;"></div>
<div class="" style="left:1560px;top:770px;width:1px;height:31px;background:#e3e3e6;"></div>
<div class="" style="left:1688px;top:739px;width:1px;height:30px;background:#e1e2ea;"></div>
<div class="" style="left:1688px;top:770px;width:1px;height:31px;background:#e3e3e6;"></div>
<div class="" style="left:1817px;top:739px;width:1px;height:30px;background:#e1e2ea;"></div>
<div class="" style="left:1817px;top:770px;width:1px;height:31px;background:#e3e3e6;"></div>
<span class="t" id="t93" style="left:25.30px;top:744.40px;font-size:15px;font-weight:400;color:#222;letter-spacing:0.188px;">26072</span>
<span class="t" id="t94" style="left:25.55px;top:775.40px;font-size:15px;font-weight:400;color:#222;letter-spacing:0.062px;">43745</span>
<span class="t" id="t95" style="left:81.80px;top:744.40px;font-size:15px;font-weight:400;color:#222;letter-spacing:-0.099px;">Системный блок 3330/S3200SHV/2xGbECC/2x250 Gb ...</span>
<span class="t" id="t96" style="left:81.80px;top:775.40px;font-size:15px;font-weight:400;color:#222;letter-spacing:-0.085px;">Сервер DEPO Storm 3450Z2 G6242K/512ПИКУ8/L936...</span>
<span class="t" id="t97" style="left:539.30px;top:744.40px;font-size:15px;font-weight:400;color:#666;letter-spacing:-0.062px;">01.01</span>
<span class="t" id="t98" style="left:613.05px;top:744.40px;font-size:15px;font-weight:400;color:#666;letter-spacing:1.000px;">83</span>
<span class="t" id="t99" style="left:686.30px;top:744.40px;font-size:15px;font-weight:400;color:#666;letter-spacing:1.500px;">83</span>
<span class="t" id="t100" style="left:760.05px;top:744.40px;font-size:15px;font-weight:400;color:#666;letter-spacing:-0.062px;">02.01</span>
<span class="t" id="t101" style="left:1406.30px;top:744.40px;font-size:15px;font-weight:400;color:#222;letter-spacing:1.000px;">10</span>
<span class="t" id="t102" style="left:539.30px;top:775.40px;font-size:15px;font-weight:400;color:#666;letter-spacing:-0.062px;">01.01</span>
<span class="t" id="t103" style="left:613.05px;top:775.40px;font-size:15px;font-weight:400;color:#666;letter-spacing:1.000px;">83</span>
<span class="t" id="t104" style="left:686.30px;top:775.40px;font-size:15px;font-weight:400;color:#666;letter-spacing:1.500px;">83</span>
<span class="t" id="t105" style="left:760.05px;top:775.40px;font-size:15px;font-weight:400;color:#666;letter-spacing:-0.062px;">02.01</span>
<span class="t" id="t106" style="left:1406.30px;top:775.40px;font-size:15px;font-weight:400;color:#222;letter-spacing:1.000px;">10</span>
<span class="t" id="t107" style="left:879.30px;top:744.40px;font-size:15px;font-weight:400;color:#666;letter-spacing:0.062px;">23 991.53</span>
<span class="t" id="t108" style="left:858.80px;top:775.40px;font-size:15px;font-weight:400;color:#666;letter-spacing:0.000px;">2 925 887.16</span>
<span class="t" id="t109" style="left:1008.05px;top:744.40px;font-size:15px;font-weight:400;color:#666;letter-spacing:0.062px;">23 991.53</span>
<span class="t" id="t110" style="left:987.30px;top:775.40px;font-size:15px;font-weight:400;color:#666;letter-spacing:0.000px;">2 519 513.84</span>
<span class="t" id="t111" style="left:1155.05px;top:744.40px;font-size:15px;font-weight:400;color:#666;letter-spacing:0.062px;">23 991.53</span>
<span class="t" id="t112" style="left:1134.30px;top:775.40px;font-size:15px;font-weight:400;color:#666;letter-spacing:0.023px;">2 925 887.16</span>
<span class="t" id="t113" style="left:1283.55px;top:744.40px;font-size:15px;font-weight:400;color:#666;letter-spacing:0.062px;">23 991.53</span>
<span class="t" id="t114" style="left:1321.05px;top:775.40px;font-size:15px;font-weight:400;color:#666;letter-spacing:0.167px;">0.00</span>
<span class="t" id="t115" style="left:1493.80px;top:744.40px;font-size:15px;font-weight:400;color:#222;letter-spacing:0.143px;">1 500.00</span>
<span class="t" id="t116" style="left:1493.80px;top:775.40px;font-size:15px;font-weight:400;color:#222;letter-spacing:0.143px;">3 000.00</span>
<span class="t" id="t117" style="left:1614.30px;top:744.40px;font-size:15px;font-weight:400;color:#666;letter-spacing:0.062px;">25 491.53</span>
<span class="t" id="t118" style="left:1593.80px;top:775.40px;font-size:15px;font-weight:400;color:#666;letter-spacing:0.000px;">2 928 887.16</span>
<span class="t" id="t119" style="left:1751.05px;top:744.40px;font-size:15px;font-weight:400;color:#666;letter-spacing:0.143px;">1 500.00</span>
<span class="t" id="t120" style="left:1751.55px;top:775.40px;font-size:15px;font-weight:400;color:#666;letter-spacing:0.071px;">2 583.33</span>
<div class="" style="left:1358px;top:645px;width:203px;height:59px;border:5px solid #ec1c24;"></div>
<div class="" style="left:1572px;top:699px;width:254px;height:5px;background:#ec1c24;border-radius:3px;"></div>
</div>
</body></html>
